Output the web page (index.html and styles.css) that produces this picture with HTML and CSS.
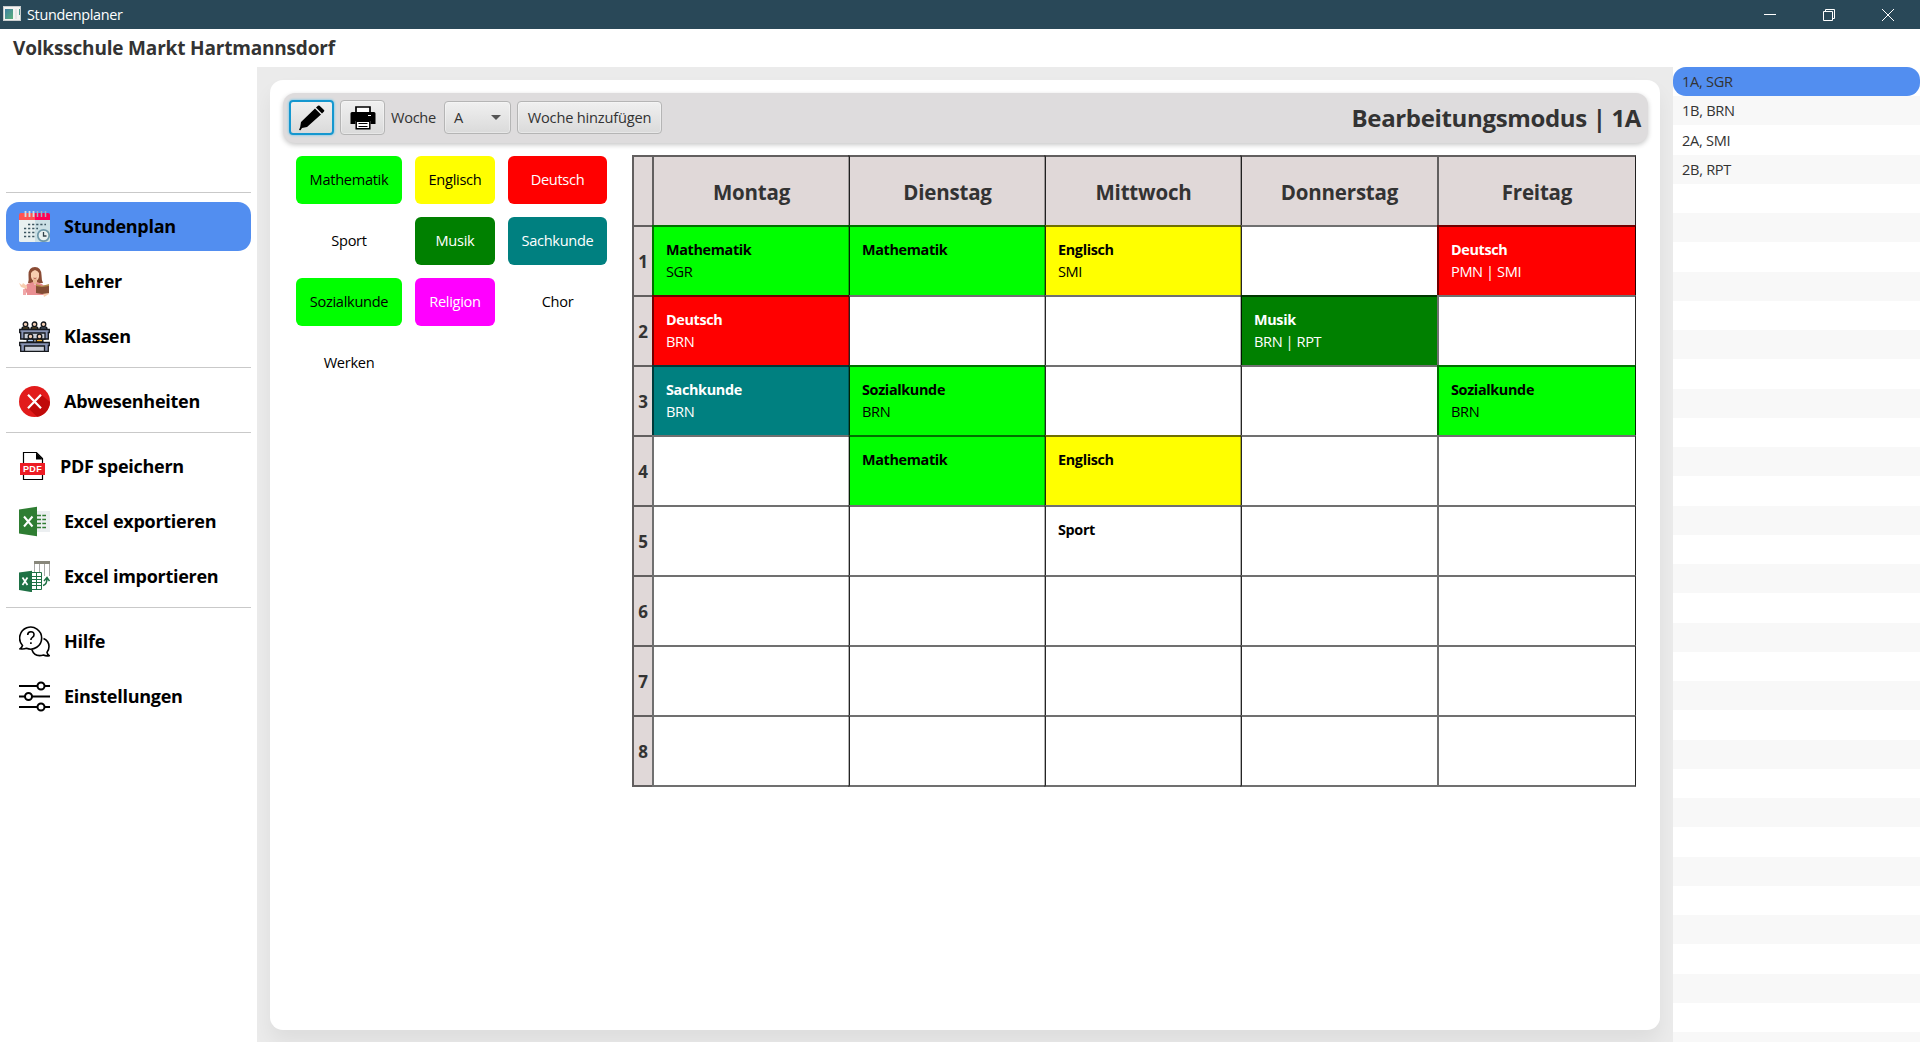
FILE: index.html
```html
<!DOCTYPE html>
<html lang="de">
<head>
<meta charset="utf-8">
<title>Stundenplaner</title>
<link rel="stylesheet" href="styles.css">
</head>
<body>
<div class="titlebar">
  <svg class="app-icon" width="18" height="15" viewBox="0 0 18 15"><defs><linearGradient id="g" x1="0" y1="0" x2="1" y2="1"><stop offset="0" stop-color="#3e7fa3"/><stop offset="1" stop-color="#5bb07a"/></linearGradient></defs><rect x=".5" y=".5" width="17" height="14" fill="#f4f4f2" stroke="#c9cdce"/><rect x="2" y="3" width="8" height="10" fill="url(#g)"/><rect x="12" y="3" width="2" height="10" fill="#e4e6e6"/><path d="M16.500 3v6" stroke="#4c9a8d"/></svg>
  <span class="app-name">Stundenplaner</span>
  <div class="controls">
    <svg width="14" height="14" viewBox="0 0 14 14"><path d="M1 6.500h12"/></svg>
    <svg width="14" height="14" viewBox="0 0 14 14"><path d="M1.500 3.500h9v9h-9zM3.500 3.500v-2h9v9h-2"/></svg>
    <svg width="14" height="14" viewBox="0 0 14 14"><path d="M1 1l12 12M13 1L1 13"/></svg>
  </div>
</div>
<header class="school">Volksschule Markt Hartmannsdorf</header>
<div class="main">
  <nav class="sidebar">
    <hr>
    <a class="item active">
      <svg width="31" height="31" viewBox="0 0 31 31"><path d="M0 9h16v22H1.500Q0 31 0 29.500z" fill="#e8f0f0"/><path d="M16 9h15v20.500Q31 31 29.500 31H16z" fill="#cbe0e5"/><path d="M0 9V4q0-2 2-2h14v7z" fill="#ff5353"/><path d="M31 9V4q0-2-2-2H16v7z" fill="#ff0055"/><path d="M6.500 0v6M10.500 0v6M14.500 0v6" stroke="#cfe0e2" stroke-width="1.800"/><path d="M18.500 0v6M22.500 0v6M26.500 0v6" stroke="#9eb5c2" stroke-width="1.500"/><path d="M9 13.500h18M5 17.500h14M5 21.500h12M5 25.500h12" stroke="#3b5560" stroke-width="1.300" stroke-dasharray="2.200 1.900"/><circle cx="24.500" cy="24.500" r="5.700" fill="#e8f0f0" stroke="#6f98a8" stroke-width="1.700"/><path d="M24.500 21v4h3" fill="none" stroke="#32424a" stroke-width="1.300"/></svg>
      <span>Stundenplan</span></a>
    <a class="item">
      <svg width="31" height="31" viewBox="0 0 31 31"><path d="M9 17Q10 14 9.500 9Q9.500 1 16 1Q22 1 22.500 9Q22.500 14 24 17z" fill="#8a4b34"/><path d="M12 7q1-2 4-3 3 1 4 3v4q-1 4-4 4t-4-4z" fill="#f7cdb0"/><path d="M14 13h4v5h-4z" fill="#eab896"/><path d="M14 16l-6 2-3 6-1 5h2l2-3v3h18v-8l-3-3-5-2-2 3z" fill="#e98f92"/><path d="M5 22l-3-1-2-4 3 2 1-2 4 3v3zM24 27l6-4v5l-5 3z" fill="#f7cdb0"/><path d="M4 23v6h3v-5z" fill="#f0a7a8"/><path d="M17 19l6 1 7-1v8l-7 1-6-1z" fill="#844d35"/><path d="M17 18l6 2 7-2v2l-7 1-6-1z" fill="#b58e4e"/><path d="M14.500 12q1.500 1 3 0" stroke="#b85e50" fill="none"/></svg>
      <span>Lehrer</span></a>
    <a class="item">
      <svg width="31" height="31" viewBox="0 0 31 31"><g stroke="#15181d" stroke-width="1.300"><path d="M3 8q0-2 2-2h3q2 0 2 2z" fill="#fbb72f"/><path d="M12 8q0-2 2-2h3q2 0 2 2z" fill="#fbb72f"/><path d="M21 8q0-2 2-2h3q2 0 2 2z" fill="#a9c9f5"/><circle cx="6.500" cy="3.300" r="2.300" fill="#f3cfb5"/><circle cx="15.500" cy="3.300" r="2.300" fill="#f3cfb5"/><circle cx="24.500" cy="3.300" r="2.300" fill="#f3cfb5"/><path d="M.7 8.500h29.600v3h-1V18H1.700v-6.500h-1z" fill="#8793b4"/><path d="M5 12h21v6H5z" fill="#c9ced8"/><path d="M8 21q0-3 2-3h3q2 0 2 3z" fill="#a9c9f5"/><path d="M17 21q0-3 2-3h3q2 0 2 3z" fill="#fbb72f"/><circle cx="11.500" cy="15.500" r="2.300" fill="#f3cfb5"/><circle cx="20.500" cy="15.500" r="2.300" fill="#f3cfb5"/><path d="M.7 21.500h29.600v3h-1v6H1.700v-6h-1z" fill="#8793b4"/><path d="M5.500 25h20v5.500h-20z" fill="#c9ced8"/></g></svg>
      <span>Klassen</span></a>
    <hr>
    <a class="item">
      <svg width="31" height="31" viewBox="0 0 31 31"><circle cx="15.500" cy="15.500" r="15.500" fill="#e21b1b"/><path d="M22 8.500l9 7.500a15.500 15.500 0 0 1-13 14.800L9 22z" fill="#c00a0a"/><path d="M9 8.800l13 13.500M22 8.800L9 22.300" stroke="#fff" stroke-width="2.200"/></svg>
      <span>Abwesenheiten</span></a>
    <hr>
    <a class="item pdf">
      <svg width="28" height="31" viewBox="0 0 28 31"><path d="M4.500 1.500h13l6 6v21h-19z" fill="#fff" stroke="#000" stroke-width="1.200"/><path d="M17 1.500v7h7z"/><path d="M1 12h25v12H1z" fill="#ed1c24"/><text x="13.500" y="21" class="pdf-label">PDF</text></svg>
      <span>PDF speichern</span></a>
    <a class="item">
      <svg width="31" height="31" viewBox="0 0 31 31"><path d="M18 5h13v21H18z" fill="#eceff1"/><path d="M18 9.500h9M18 13.500h9M18 17.500h9M18 21.500h9" stroke="#2f7d32" stroke-width="1.600" stroke-dasharray="4 1.300"/><path d="M0 3.500L18 .8v29.400l-18-2.700z" fill="#2e7d32"/><path d="M5 10.500l8.500 10M13.500 10.500L5 20.500" stroke="#fff" stroke-width="2"/></svg>
      <span>Excel exportieren</span></a>
    <a class="item">
      <svg width="31" height="31" viewBox="0 0 31 31"><path d="M15 0h16v3H15z" fill="#88877b"/><path d="M15.500 3v8M20.500 3v8M25.500 3v12M30.500 3v12" stroke="#aaa" fill="none"/><path d="M12 11.500h10.500v17H12" fill="#fff" stroke="#1e7145"/><path d="M13 15.500h9M13 18.500h9M13 21.500h9M13 24.500h9M17.500 12v16" stroke="#1e7145"/><path d="M0 11.500l13-1.800v21.500L0 29z" fill="#1e7145"/><path d="M3.500 16.500l5 7.500M8.500 16.500l-5 7.500" stroke="#fff" stroke-width="1.700"/><path d="M24 24.500q4-1 4-7M25 20l3-3.500 2.500 3.500" fill="none" stroke="#1e7145" stroke-width="1.500"/></svg>
      <span>Excel importieren</span></a>
    <hr>
    <a class="item">
      <svg width="31" height="31" viewBox="0 0 31 31" fill="none" stroke="#000" stroke-width="1.600"><path d="M3.500 19.500A11 11 0 1 1 7.500 22.300Q4.500 23.500 1 22.800Q3 21.500 3.500 19.500z"/><path d="M24.500 12.500Q30 15 30 20.500Q30 24 28 26.300Q28.300 28.500 30.300 29.600Q27 30.300 24.500 29Q15.500 31.500 12.800 23.500"/><path d="M8.700 9q0-3.300 3.200-3.300T15 8.800q0 1.700-1.600 2.600T11.900 14M11.900 16.200v1.700"/></svg>
      <span>Hilfe</span></a>
    <a class="item">
      <svg width="31" height="31" viewBox="0 0 31 31" fill="#fff" stroke="#000" stroke-width="2"><path d="M0 5h31M0 15.500h31M0 26h31"/><circle cx="22" cy="5" r="3.500"/><circle cx="9.500" cy="15.500" r="3.500"/><circle cx="22" cy="26" r="3.500"/></svg>
      <span>Einstellungen</span></a>
  </nav>
  <section class="stage">
    <div class="card">
      <div class="toolbar">
        <button class="btn icon focus"><svg width="26" height="26" viewBox="0 0 26 26"><path d="M16 3.500l6 6L8 22l-5 1-1.500 2.200L0 25l1.200-3L2 17zM17 2.500L19 .7q.8-.6 1.600 0L25 5q.7.800 0 1.600l-2 2z"/></svg></button>
        <button class="btn icon"><svg width="26" height="24" viewBox="0 0 26 24"><path d="M6 7V1h14v6" fill="#fff" stroke="#000" stroke-width="1.700"/><path d="M2 6h22q1.500 0 1.500 1.500V18h-5v-3h-15v3h-5V7.500Q.5 6 2 6z"/><path d="M6.200 15.200h13.600v7.600H6.200z" fill="#fff" stroke="#000" stroke-width="1.500"/><path d="M8.500 17.500h9M8.500 20.500h9" stroke="#000" stroke-width="1.200"/><path d="M18 9.500h3" stroke="#fff"/></svg></button>
        <span class="label">Woche</span>
        <div class="btn combo"><span>A</span><i class="arrow"></i></div>
        <button class="btn add">Woche hinzufügen</button>
        <h1>Bearbeitungsmodus | 1A</h1>
      </div>
      <div class="work">
        <div class="chips">
          <div class="chip lime">Mathematik</div><div class="chip yellow">Englisch</div><div class="chip red">Deutsch</div>
          <div class="chip">Sport</div><div class="chip green">Musik</div><div class="chip teal">Sachkunde</div>
          <div class="chip lime">Sozialkunde</div><div class="chip magenta">Religion</div><div class="chip">Chor</div>
          <div class="chip">Werken</div>
        </div>
        <div class="grid">
          <div class="head"></div><div class="head">Montag</div><div class="head">Dienstag</div><div class="head">Mittwoch</div><div class="head">Donnerstag</div><div class="head">Freitag</div>
          <div class="num">1</div><div class="lime"><b>Mathematik</b><span>SGR</span></div><div class="lime"><b>Mathematik</b></div><div class="yellow"><b>Englisch</b><span>SMI</span></div><div></div><div class="red"><b>Deutsch</b><span>PMN | SMI</span></div>
          <div class="num">2</div><div class="red"><b>Deutsch</b><span>BRN</span></div><div></div><div></div><div class="green"><b>Musik</b><span>BRN | RPT</span></div><div></div>
          <div class="num">3</div><div class="teal"><b>Sachkunde</b><span>BRN</span></div><div class="lime"><b>Sozialkunde</b><span>BRN</span></div><div></div><div></div><div class="lime"><b>Sozialkunde</b><span>BRN</span></div>
          <div class="num">4</div><div></div><div class="lime"><b>Mathematik</b></div><div class="yellow"><b>Englisch</b></div><div></div><div></div>
          <div class="num">5</div><div></div><div></div><div><b>Sport</b></div><div></div><div></div>
          <div class="num">6</div><div></div><div></div><div></div><div></div><div></div>
          <div class="num">7</div><div></div><div></div><div></div><div></div><div></div>
          <div class="num">8</div><div></div><div></div><div></div><div></div><div></div>
        </div>
      </div>
    </div>
  </section>
  <aside class="classes">
    <div class="row selected">1A, SGR</div>
    <div class="row">1B, BRN</div>
    <div class="row">2A, SMI</div>
    <div class="row">2B, RPT</div>
  </aside>
</div>
</body>
</html>
```
FILE: styles.css
```css
* { box-sizing: border-box; }
body {
  margin: 0;
  width: 1920px;
  height: 1042px;
  overflow: hidden;
  display: flex;
  flex-direction: column;
  background: #fff;
  color: #333;
  font: 14.6px/20px "Open Sans", "Noto Sans", sans-serif;
  letter-spacing: -.3px;
}
svg { display: block; flex: none; }

.titlebar {
  height: 29px;
  flex: none;
  display: flex;
  align-items: center;
  padding: 0 25px 0 3px;
  background: #294858;
  color: #fff;
}
.app-icon { margin-bottom: 2px; }
.app-name { margin-left: 6px; font-size: 14.4px; }
.controls { margin-left: auto; display: flex; gap: 45px; }
.controls svg { fill: none; stroke: #fff; }

.school {
  height: 38px;
  flex: none;
  padding-left: 13px;
  font-size: 19px;
  font-weight: 700;
  line-height: 38px;
  letter-spacing: -.18px;
}
.main { flex: 1; min-height: 0; display: flex; }

.sidebar {
  width: 257px;
  flex: none;
  padding: 125px 6px 0;
  display: flex;
  flex-direction: column;
  gap: 6px;
}
.sidebar hr { width: 100%; height: 1px; margin: 0 0 3px; border: 0; background: #c9c9c9; flex: none; }
.item {
  height: 49px;
  flex: none;
  display: flex;
  align-items: center;
  gap: 14px;
  padding-left: 13px;
  border-radius: 13px;
  color: #000;
  font-size: 18px;
  font-weight: 700;
  letter-spacing: -.27px;
}
.item span { padding-bottom: 2px; }
.item.active { background: #528ef0; }
.item.pdf { gap: 13px; }
.pdf-label { font: 700 9px "Liberation Sans", sans-serif; fill: #fff; text-anchor: middle; letter-spacing: .3px; }

.stage { width: 1416px; flex: none; padding: 13px 13px 12px; background: #ebebeb; overflow: hidden; }
.card {
  height: 950px;
  padding: 13px 12px 0 13px;
  background: #fff;
  border-radius: 13px;
  box-shadow: 0 12px 20px rgba(0, 0, 0, .06);
}
.toolbar {
  height: 50px;
  display: flex;
  align-items: center;
  padding: 0 7px 0 6px;
  border-radius: 12px;
  background: #dedcdd;
  box-shadow: 0 2px 5px rgba(0, 0, 0, .22);
}
.toolbar h1 { margin: 0 0 0 auto; font-size: 24px; line-height: 32px; letter-spacing: -.35px; }
.btn {
  height: 33px;
  margin-bottom: 1px;
  padding: 0 9px;
  border: 1px solid #b5b5b5;
  border-radius: 4px;
  background: linear-gradient(#f0f0f0, #dadada);
  box-shadow: inset 0 0 0 1px rgba(255, 255, 255, .35);
  color: #333;
  font: inherit;
  letter-spacing: inherit;
}
.btn.icon { width: 45px; height: 35px; margin-right: 6px; display: grid; place-items: center; padding: 0; }
.btn.focus { border: 2px solid #1597cf; box-shadow: 0 0 2px 1px #9ccfe5; }
.label { width: 53px; margin-bottom: 2px; }
.combo { width: 67px; margin-right: 6px; display: flex; align-items: center; justify-content: space-between; }
.arrow { border: 5px solid transparent; border-top-color: #555; border-bottom: 0; }
.combo span { padding-bottom: 1px; }
.add { width: 145px; padding: 0 0 1px; letter-spacing: -.18px; }

.work { display: flex; align-items: flex-start; justify-content: space-between; padding: 12px 12px 0 13px; }
.chips {
  margin-top: 1px;
  display: grid;
  grid-template-columns: 106px 80px 99px;
  grid-auto-rows: 48px;
  gap: 13px;
  color: #000;
}
.chip { border-radius: 6px; text-align: center; line-height: 46px; }
.lime { background: #0f0; color: #000; }
.yellow { background: #ff0; color: #000; }
.red { background: #f00; color: #fff; }
.green { background: #008000; color: #fff; }
.teal { background: #008080; color: #fff; }
.magenta { background: #f0f; color: #fff; }

.grid {
  display: grid;
  grid-template-columns: 20px 197px 196px 196px 196px 199px;
  grid-template-rows: repeat(8, 70px) 72px;
  color: #000;
}
.grid > div {
  display: flex;
  flex-direction: column;
  padding: 12px 0 0 12px;
  line-height: 22px;
  border-top: 2px solid rgba(0, 0, 0, .56);
  border-left: 1px solid rgba(0, 0, 0, .85);
  box-shadow: -1px 0 0 rgba(0, 0, 0, .3);
}
.grid > div:nth-child(6n+1),
.grid > div:nth-child(6n+2),
.grid > div:nth-child(6n) { border-left: 2px solid rgba(0, 0, 0, .56); box-shadow: none; }
.grid > div:nth-child(6n) { border-right: 1px solid rgba(0, 0, 0, .85); }
.grid > div:nth-child(n+49) { border-bottom: 2px solid rgba(0, 0, 0, .56); }
.grid b { font-size: 14.4px; letter-spacing: -.34px; }
.grid span { margin-top: -1px; letter-spacing: -.4px; }
.grid > .head, .grid > .num {
  background: #e0d8d8;
  color: #333;
  font-weight: 700;
  align-items: center;
  justify-content: center;
  padding: 2px 0 0 !important;
}
.head { font-size: 20.5px; letter-spacing: -.2px; }
.num { font-size: 17px; letter-spacing: 0; }

.classes { flex: 1; background: repeating-linear-gradient(#fff 0 29.250px, #f8f8f8 29.250px 58.500px); }
.row { height: 29.250px; padding-left: 9px; line-height: 28px; }
.selected { background: #528ef0; border-radius: 13px; }
```
